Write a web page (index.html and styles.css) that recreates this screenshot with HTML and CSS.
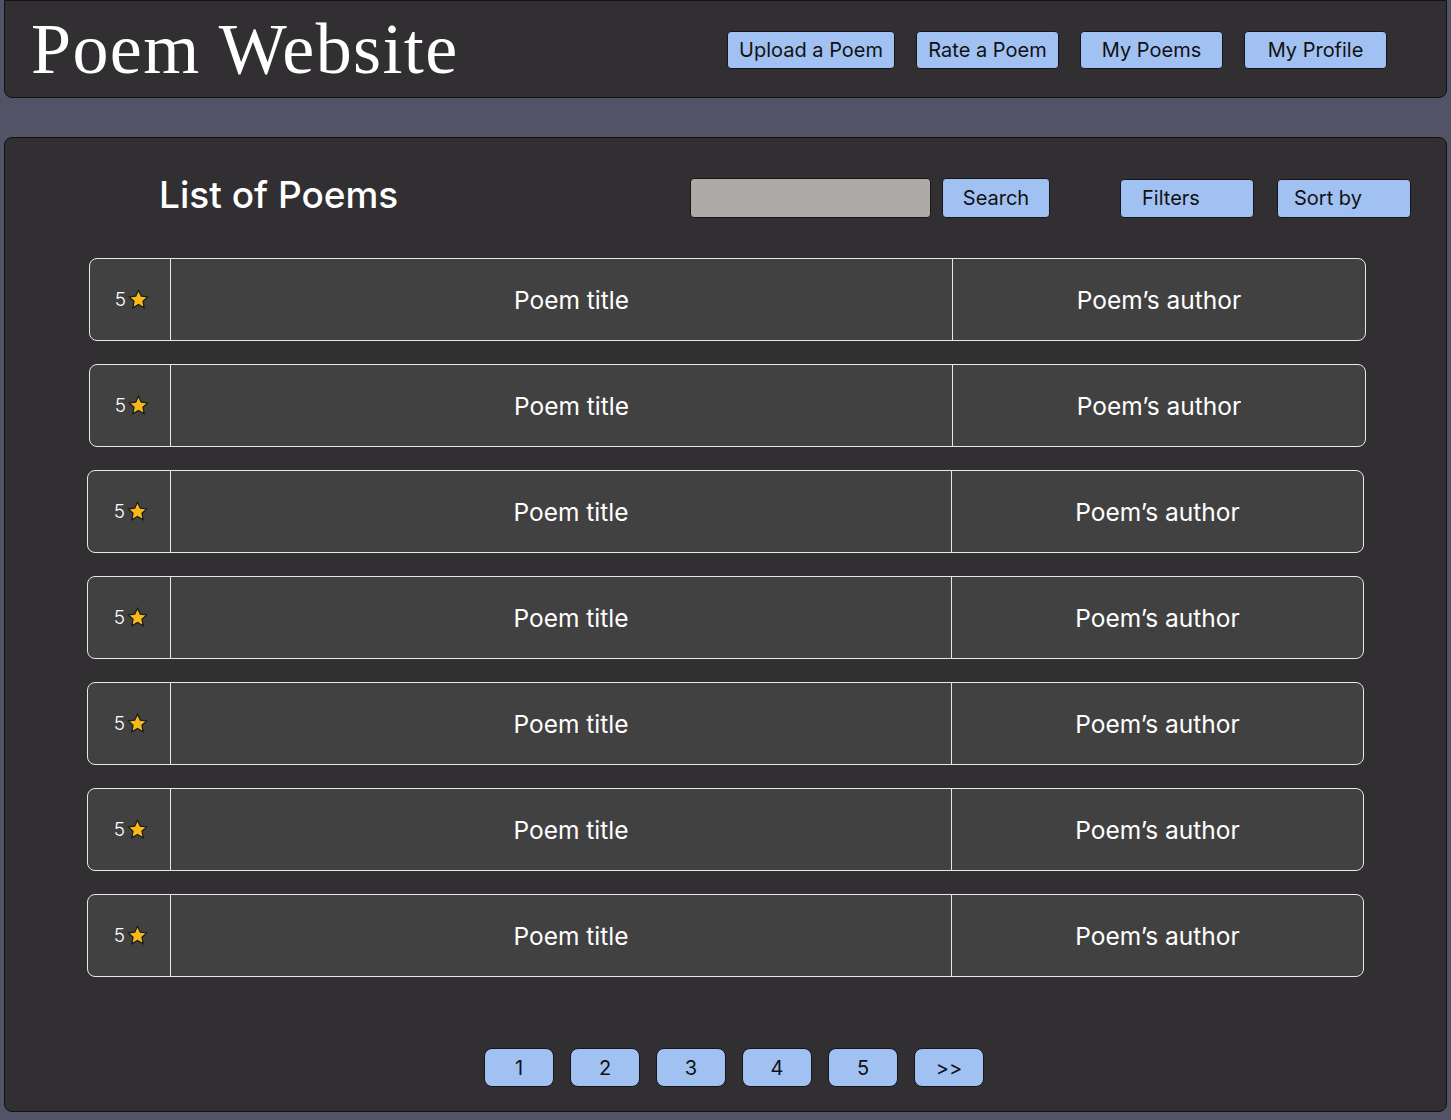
FILE: index.html
```html
<!DOCTYPE html>
<html lang="en">
<head>
<meta charset="utf-8">
<title>Poem Website</title>
<link rel="stylesheet" href="styles.css">
</head>
<body>
<header class="topbar">
  <h1 class="site-title">Poem Website</h1>
  <nav class="nav">
    <a class="btn nav-btn nav-wide" href="#">Upload a Poem</a>
    <a class="btn nav-btn" href="#">Rate a Poem</a>
    <a class="btn nav-btn" href="#">My Poems</a>
    <a class="btn nav-btn" href="#">My Profile</a>
  </nav>
</header>
<main class="panel">
  <div class="toolbar">
    <h2 class="list-title">List of Poems</h2>
    <input class="search-input" type="text" aria-label="Search poems">
    <button class="btn search-btn">Search</button>
    <button class="btn tool-btn filters-btn">Filters</button>
    <button class="btn tool-btn">Sort by</button>
  </div>
  <ul class="poems">
    <li class="poem"><div class="cell rating"><span>5</span><svg class="star" width="21" height="21" viewBox="0 0 24 24"><polygon points="12,1.5 15.2,8.2 22.5,9.1 17.1,14.1 18.5,21.4 12,17.8 5.5,21.4 6.9,14.1 1.5,9.1 8.8,8.2"/></svg></div><div class="cell title">Poem title</div><div class="cell author">Poem’s author</div></li>
    <li class="poem"><div class="cell rating"><span>5</span><svg class="star" width="21" height="21" viewBox="0 0 24 24"><polygon points="12,1.5 15.2,8.2 22.5,9.1 17.1,14.1 18.5,21.4 12,17.8 5.5,21.4 6.9,14.1 1.5,9.1 8.8,8.2"/></svg></div><div class="cell title">Poem title</div><div class="cell author">Poem’s author</div></li>
    <li class="poem poem-shift"><div class="cell rating"><span>5</span><svg class="star" width="21" height="21" viewBox="0 0 24 24"><polygon points="12,1.5 15.2,8.2 22.5,9.1 17.1,14.1 18.5,21.4 12,17.8 5.5,21.4 6.9,14.1 1.5,9.1 8.8,8.2"/></svg></div><div class="cell title">Poem title</div><div class="cell author">Poem’s author</div></li>
    <li class="poem poem-shift"><div class="cell rating"><span>5</span><svg class="star" width="21" height="21" viewBox="0 0 24 24"><polygon points="12,1.5 15.2,8.2 22.5,9.1 17.1,14.1 18.5,21.4 12,17.8 5.5,21.4 6.9,14.1 1.5,9.1 8.8,8.2"/></svg></div><div class="cell title">Poem title</div><div class="cell author">Poem’s author</div></li>
    <li class="poem poem-shift"><div class="cell rating"><span>5</span><svg class="star" width="21" height="21" viewBox="0 0 24 24"><polygon points="12,1.5 15.2,8.2 22.5,9.1 17.1,14.1 18.5,21.4 12,17.8 5.5,21.4 6.9,14.1 1.5,9.1 8.8,8.2"/></svg></div><div class="cell title">Poem title</div><div class="cell author">Poem’s author</div></li>
    <li class="poem poem-shift"><div class="cell rating"><span>5</span><svg class="star" width="21" height="21" viewBox="0 0 24 24"><polygon points="12,1.5 15.2,8.2 22.5,9.1 17.1,14.1 18.5,21.4 12,17.8 5.5,21.4 6.9,14.1 1.5,9.1 8.8,8.2"/></svg></div><div class="cell title">Poem title</div><div class="cell author">Poem’s author</div></li>
    <li class="poem poem-shift"><div class="cell rating"><span>5</span><svg class="star" width="21" height="21" viewBox="0 0 24 24"><polygon points="12,1.5 15.2,8.2 22.5,9.1 17.1,14.1 18.5,21.4 12,17.8 5.5,21.4 6.9,14.1 1.5,9.1 8.8,8.2"/></svg></div><div class="cell title">Poem title</div><div class="cell author">Poem’s author</div></li>
  </ul>
  <nav class="pager">
    <a class="btn page-btn" href="#">1</a>
    <a class="btn page-btn" href="#">2</a>
    <a class="btn page-btn" href="#">3</a>
    <a class="btn page-btn" href="#">4</a>
    <a class="btn page-btn" href="#">5</a>
    <a class="btn page-btn" href="#">&gt;&gt;</a>
  </nav>
</main>
</body>
</html>
```

FILE: styles.css
```css
* { box-sizing: border-box; }

html, body {
  margin: 0;
  padding: 0;
}

body {
  background: #535368;
  padding: 0 4px;
  font-family: Inter, "Noto Sans", sans-serif;
  color: #ffffff;
  height: 1120px;
  overflow: hidden;
}

.topbar {
  height: 98px;
  background: #312f31;
  border: 1px solid #111111;
  border-radius: 0 0 8px 8px;
  display: flex;
  align-items: center;
  padding: 0 59px 0 26px;
}

.site-title {
  margin: 0;
  font-family: "Liberation Serif", "Times New Roman", serif;
  font-weight: 400;
  font-size: 72px;
  line-height: 1;
  color: #ffffff;
  letter-spacing: 1.4px;
}

.nav {
  margin-left: auto;
  display: flex;
  gap: 21px;
  padding-top: 1px;
}

.btn {
  background: #a1c1f3;
  border: 1px solid #161616;
  color: #111111;
  font-family: Inter, "Noto Sans", sans-serif;
  font-size: 20px;
  text-decoration: none;
  display: flex;
  align-items: center;
  justify-content: center;
  padding: 0;
}

.nav-btn {
  width: 143px;
  height: 38px;
  border-radius: 4px;
}

.nav-wide { width: 168px; }

.panel {
  margin-top: 39px;
  height: 975px;
  background: #312f31;
  border: 1px solid #111111;
  border-radius: 8px;
  padding: 40px 35px 0 0;
  display: flex;
  flex-direction: column;
}

.toolbar {
  display: flex;
  align-items: center;
  height: 40px;
  padding-left: 154px;
}

.list-title {
  margin: 0;
  font-size: 37px;
  font-weight: 500;
  color: #ffffff;
  line-height: 1;
  position: relative;
  top: -4px;
}

.search-input {
  margin-left: auto;
  width: 241px;
  height: 40px;
  background: #adaaa8;
  border: 1px solid #161616;
  border-radius: 4px;
}

.search-btn {
  margin-left: 11px;
  width: 108px;
  height: 40px;
  border-radius: 4px;
}

.tool-btn {
  width: 134px;
  height: 39px;
  border-radius: 4px;
  justify-content: flex-start;
  padding-left: 16px;
  margin-left: 23px;
}

.filters-btn {
  margin-left: 70px;
  padding-left: 21px;
}

.poems {
  list-style: none;
  margin: 40px 0 0 84px;
  padding: 0;
  display: flex;
  flex-direction: column;
  align-items: flex-start;
  gap: 23px;
}

.poem {
  width: 1277px;
  height: 83px;
  display: grid;
  grid-template-columns: 81px 782px 1fr;
  background: #424142;
  border: 1px solid #e8e8e8;
  border-radius: 8px;
  overflow: hidden;
}

.poem-shift {
  margin-left: -2px;
  grid-template-columns: 83px 781px 1fr;
}

.cell {
  display: flex;
  align-items: center;
  justify-content: center;
  font-size: 24.5px;
  color: #ffffff;
}

.rating,
.title {
  border-right: 1px solid #e8e8e8;
}

.title { padding-left: 20px; }

.rating {
  font-size: 19px;
  font-weight: 300;
  gap: 2px;
  padding-left: 4px;
}

.star {
  flex: none;
  width: 21px;
  height: 21px;
  fill: #f7b919;
  stroke: #1a1a1a;
  stroke-width: 1.4;
  stroke-linejoin: miter;
}

.pager {
  margin-top: 71px;
  display: flex;
  justify-content: center;
  gap: 16px;
  padding-left: 52px;
}

.page-btn {
  width: 70px;
  height: 39px;
  border-radius: 8px;
}
```
